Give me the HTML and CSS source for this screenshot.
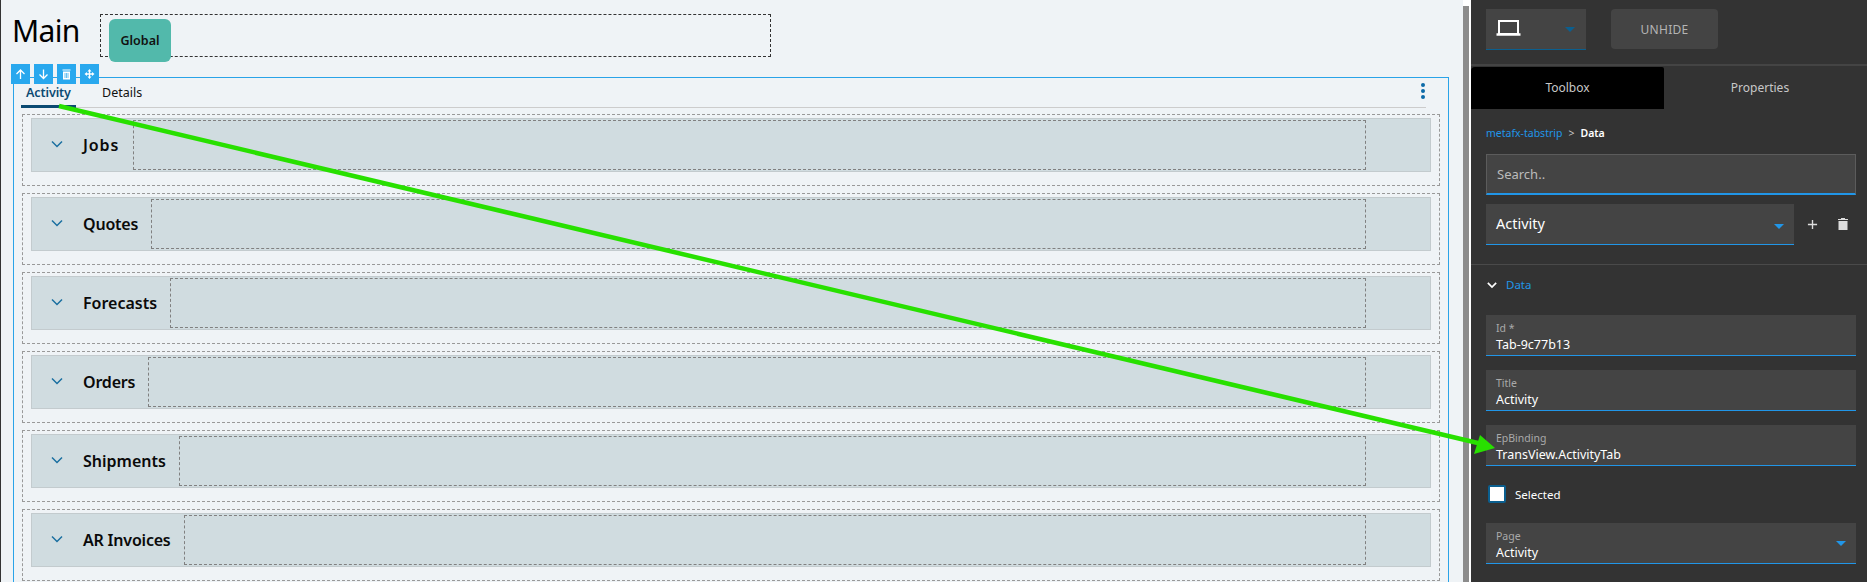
FILE: index.html
```html
<!DOCTYPE html>
<html lang="en">
<head>
    <meta charset="UTF-8">
    <title>Page Designer</title>
    <link rel="stylesheet" href="styles.css">
</head>
<body>
    <div class="main">
        <div class="page-head">
            <h1 class="page-title">Main</h1>
            <div class="drop-zone">
                <button class="global-btn">Global</button>
            </div>
        </div>

        <div class="frame">
            <div class="frame-tools">
                <span class="tool"><svg viewBox="0 0 19 20"><path d="M9.500 15V6.500M5.500 10l4-4 4 4" /></svg></span>
                <span class="tool"><svg viewBox="0 0 19 20"><path d="M9.500 5.500V14M5.500 10.500l4 4 4-4" /></svg></span>
                <span class="tool"><svg viewBox="0 0 19 20"><path class="fill" d="M5.500 5.500h8v1h-8zM6 7.500h7v8H6z" /><path class="cut" d="M8 9v5M9.500 9v5M11 9v5" /></svg></span>
                <span class="tool"><svg viewBox="0 0 19 20"><path class="fill" d="M9.500 5l2 2.500h-4zM9.500 15l-2-2.500h4zM4.500 10l2.500-2v4zM14.500 10 12 12V8z" /><path d="M9.500 7v6M7 10h5" /></svg></span>
            </div>

            <div class="tabstrip">
                <a class="tab active">Activity</a>
                <a class="tab">Details</a>
                <span class="kebab"><i></i><i></i><i></i></span>
            </div>

            <div class="rows">
                <div class="row"><div class="row-inner">
                    <svg class="chev" viewBox="0 0 12 8"><path d="M1 1.500 6 6.500l5-5" /></svg>
                    <span class="row-label jobs">Jobs</span><div class="row-zone"></div>
                </div></div>
                <div class="row"><div class="row-inner">
                    <svg class="chev" viewBox="0 0 12 8"><path d="M1 1.500 6 6.500l5-5" /></svg>
                    <span class="row-label">Quotes</span><div class="row-zone"></div>
                </div></div>
                <div class="row"><div class="row-inner">
                    <svg class="chev" viewBox="0 0 12 8"><path d="M1 1.500 6 6.500l5-5" /></svg>
                    <span class="row-label loose">Forecasts</span><div class="row-zone"></div>
                </div></div>
                <div class="row"><div class="row-inner">
                    <svg class="chev" viewBox="0 0 12 8"><path d="M1 1.500 6 6.500l5-5" /></svg>
                    <span class="row-label">Orders</span><div class="row-zone"></div>
                </div></div>
                <div class="row"><div class="row-inner">
                    <svg class="chev" viewBox="0 0 12 8"><path d="M1 1.500 6 6.500l5-5" /></svg>
                    <span class="row-label loose">Shipments</span><div class="row-zone"></div>
                </div></div>
                <div class="row"><div class="row-inner">
                    <svg class="chev" viewBox="0 0 12 8"><path d="M1 1.500 6 6.500l5-5" /></svg>
                    <span class="row-label">AR Invoices</span><div class="row-zone"></div>
                </div></div>
            </div>
        </div>
    </div>

    <div class="gutter"><div class="scroll-thumb"></div></div>

    <div class="panel">
        <div class="panel-top">
            <div class="device-select">
                <svg class="laptop" viewBox="0 0 25 16"><path d="M3 1h19v13H3z" /><path class="base" d="M0.500 14.500h24" /></svg>
                <span class="caret dark"></span>
            </div>
            <button class="unhide">UNHIDE</button>
        </div>

        <div class="panel-tabs">
            <div class="panel-tab active">Toolbox</div>
            <div class="panel-tab">Properties</div>
        </div>

        <div class="crumbs"><span class="crumb-link">metafx-tabstrip</span><span class="crumb-sep">&gt;</span><span class="crumb-now">Data</span></div>

        <div class="search">Search..</div>

        <div class="tab-picker">
            <div class="picker">Activity<span class="caret"></span></div>
            <svg class="picker-add" viewBox="0 0 12 12"><path d="M6 1v10M1 6h10" /></svg>
            <svg class="picker-del" viewBox="0 0 10 12"><path d="M0 1h10v1H0zM3 0h4v1H3zM0.500 3h9v9h-9z" /></svg>
        </div>

        <div class="section-head">
            <svg viewBox="0 0 12 8"><path d="M1 1.500 6 6.500l5-5" /></svg>
            <span>Data</span>
        </div>

        <div class="field"><label>Id *</label><div class="value">Tab-9c77b13</div></div>
        <div class="field"><label>Title</label><div class="value">Activity</div></div>
        <div class="field"><label>EpBinding</label><div class="value">TransView.ActivityTab</div></div>

        <div class="check-row"><span class="check"></span><span>Selected</span></div>

        <div class="field"><label>Page</label><div class="value">Activity</div><span class="caret"></span></div>
    </div>

    <!-- annotation drawn on top of the screenshot -->
    <svg class="annotation" viewBox="0 0 1867 582">
        <path class="arrow-line" d="M59 106 1482 444" />
        <path class="arrow-head" d="M1495 448 1480 435 1474 454z" />
    </svg>
</body>
</html>
```

FILE: styles.css
```css
* {
    box-sizing: border-box;
}

body {
    margin: 0;
    height: 582px;
    overflow: hidden;
    display: flex;
    position: relative;
    font-family: "Noto Sans", "Open Sans", sans-serif;
    background: #eff3f6;
    color: #000;
}

.main {
    width: 1463px;
    height: 582px;
    overflow: hidden;
    border-left: 1px solid #333;
}

.page-head {
    height: 77px;
    display: flex;
    align-items: flex-start;
}

.page-title {
    width: 88px;
    margin: 11px 0 0 11px;
    font-size: 30px;
    font-weight: 400;
    line-height: 40px;
    letter-spacing: -0.7px;
}

.drop-zone {
    width: 671px;
    height: 43px;
    margin-top: 14px;
    padding: 4px 8px;
    border: 1px dashed #333;
}

.global-btn {
    display: block;
    width: 62px;
    height: 43px;
    border: none;
    border-radius: 6px;
    background: #52b9ab;
    font-family: inherit;
    font-size: 12.5px;
    font-weight: 600;
    color: #111;
}

.frame {
    position: relative;
    width: 1436px;
    height: 520px;
    margin-left: 12px;
    padding: 0 0 0 7px;
    border: 1px solid #29a3e8;
    border-bottom: none;
}

.frame-tools {
    position: absolute;
    left: -3px;
    top: -14px;
    display: flex;
    gap: 4px;
}

.tool {
    width: 19px;
    height: 20px;
    display: block;
    background: #29a8ee;
}

.tool svg {
    display: block;
    width: 19px;
    height: 20px;
    fill: none;
    stroke: #fff;
    stroke-width: 1.3;
}

.tool .fill {
    fill: #fff;
    stroke: none;
}

.tool .cut {
    stroke: #29a8ee;
    stroke-width: 0.7;
}

.tabstrip {
    position: relative;
    width: 1405px;
    height: 30px;
    display: flex;
    border-bottom: 1px solid #ccc;
}

.tab {
    height: 30px;
    padding: 6px 6px 0 5px;
    font-size: 12.5px;
    line-height: 17px;
    margin-right: 21px;
    color: #111;
}

.tab.active {
    width: 55px;
    font-weight: 600;
    color: #0b4a72;
    border-bottom: 3px solid #0b4a72;
    letter-spacing: -0.1px;
}

.kebab {
    position: absolute;
    right: 1px;
    top: 5px;
    display: flex;
    flex-direction: column;
    gap: 2px;
}

.kebab i {
    width: 4px;
    height: 4px;
    border-radius: 50%;
    background: #0c6ba8;
}

.rows {
    margin: 6px 0 0 1px;
    display: flex;
    flex-direction: column;
    gap: 7px;
}

.row {
    width: 1418px;
    height: 72px;
    padding: 3px 8px;
    border: 1px dashed #999;
}

.row-inner {
    height: 54px;
    display: flex;
    align-items: center;
    padding-left: 19px;
    background: #d0dce0;
    border: 1px solid #c3cbce;
}

.chev {
    width: 12px;
    height: 8px;
    margin: 0 20px 2px 0;
    flex: none;
    fill: none;
    stroke: #1a6fa0;
    stroke-width: 1.500;
}

.row-label {
    font-size: 16px;
    font-weight: 600;
    color: #0a0a0a;
    margin-right: 13px;
    white-space: nowrap;
    letter-spacing: -0.2px;
}

/* Noto runs a bit narrower than the real font on these words */
.row-label.loose {
    letter-spacing: 0;
}

.row-label.jobs {
    letter-spacing: 0.9px;
    margin-right: 14px;
}

.row-zone {
    flex: 1;
    height: 50px;
    margin-right: 64px;
    border: 1px dashed #808080;
}

.gutter {
    position: relative;
    width: 8px;
    height: 582px;
    background: #fff;
}

.scroll-thumb {
    width: 6px;
    height: 576px;
    margin-top: 6px;
    background: #8c8c8c;
}

.panel {
    width: 396px;
    height: 582px;
    background: #333;
    color: #fff;
}

.panel-top {
    height: 66px;
    padding: 9px 15px 0;
    display: flex;
    gap: 25px;
    border-bottom: 2px solid #444;
}

.device-select {
    position: relative;
    width: 100px;
    height: 41px;
    background: #444;
    border-bottom: 1px solid #0b5f8f;
}

.laptop {
    position: absolute;
    left: 10px;
    top: 11px;
    width: 25px;
    height: 16px;
    fill: none;
    stroke: #fff;
    stroke-width: 2;
}

.laptop .base {
    stroke-width: 2.500;
}

.caret {
    position: absolute;
    right: 10px;
    top: 18px;
    width: 0;
    height: 0;
    border-left: 5px solid transparent;
    border-right: 5px solid transparent;
    border-top: 5px solid #2196e8;
}

.caret.dark {
    border-top-color: #0b5f8f;
    right: 11px;
    top: 18px;
}

.unhide {
    width: 107px;
    height: 40px;
    border: none;
    border-radius: 4px;
    background: #444;
    color: #b4b4b4;
    font-family: inherit;
    font-size: 12px;
    letter-spacing: 0.3px;
}

.panel-tabs {
    height: 43px;
    padding-top: 1px;
    display: flex;
}

.panel-tab {
    height: 42px;
    width: 193px;
    text-align: center;
    font-size: 12px;
    line-height: 42px;
    color: #c8c8c8;
}

.panel-tab:last-child {
    flex: 1;
    padding-right: 11px;
}

.panel-tab.active {
    background: #000;
    border-top-left-radius: 4px;
    border-top-right-radius: 2px;
}

.crumbs {
    height: 45px;
    padding: 15px 0 0 15px;
    font-size: 10.5px;
    line-height: 18px;
}

.crumb-link {
    color: #2196e8;
}

.crumb-sep {
    margin: 0 6px;
    color: #ccc;
}

.crumb-now {
    font-weight: 600;
}

.search {
    width: 370px;
    height: 41px;
    margin-left: 15px;
    padding: 0 10px;
    background: #444;
    border: 1px solid #5c5c5c;
    border-bottom: 2px solid #2196e8;
    font-size: 13px;
    line-height: 38px;
    color: #bbb;
}

.tab-picker {
    height: 61px;
    margin-top: 9px;
    padding-left: 15px;
    display: flex;
    align-items: flex-start;
    border-bottom: 1px solid #4a4a4a;
}

.picker {
    position: relative;
    width: 308px;
    height: 41px;
    padding-left: 10px;
    background: #444;
    border-bottom: 1px solid #2196e8;
    font-size: 14.5px;
    line-height: 39px;
}

.picker .caret {
    top: 20px;
}

.picker-add {
    width: 11px;
    height: 11px;
    margin: 15px 0 0 13px;
    fill: none;
    stroke: #ddd;
    stroke-width: 1.500;
}

.picker-del {
    width: 10px;
    height: 12px;
    margin: 14px 0 0 20px;
    fill: #ddd;
}

.section-head {
    height: 50px;
    padding: 12px 0 0 16px;
    display: flex;
    align-items: flex-start;
    gap: 9px;
    font-size: 11.5px;
    line-height: 16px;
    color: #2196e8;
}

.section-head svg {
    width: 10px;
    height: 8px;
    margin-top: 4px;
    fill: none;
    stroke: #fff;
    stroke-width: 2;
}

.field {
    position: relative;
    width: 370px;
    height: 41px;
    margin: 0 0 14px 15px;
    padding: 6px 10px 0;
    background: #444;
    border-bottom: 1px solid #2196e8;
}

.field label {
    display: block;
    font-size: 10.5px;
    line-height: 14px;
    color: #aaa;
}

.field .value {
    margin-top: 1px;
    font-size: 12.5px;
    line-height: 18px;
    color: #fff;
}

.check-row {
    height: 30px;
    margin-top: -1px;
    margin-bottom: 14px;
    padding-left: 17px;
    display: flex;
    align-items: center;
    gap: 9px;
    font-size: 11.5px;
}

.check {
    width: 18px;
    height: 18px;
    background: #fff;
    border: 2px solid #0b5f8f;
    border-radius: 2px;
}

.annotation {
    position: absolute;
    left: 0;
    top: 0;
    width: 1867px;
    height: 582px;
    pointer-events: none;
}

.arrow-line {
    fill: none;
    stroke: #28e000;
    stroke-width: 4.5;
}

.arrow-head {
    fill: #28e000;
}
```
